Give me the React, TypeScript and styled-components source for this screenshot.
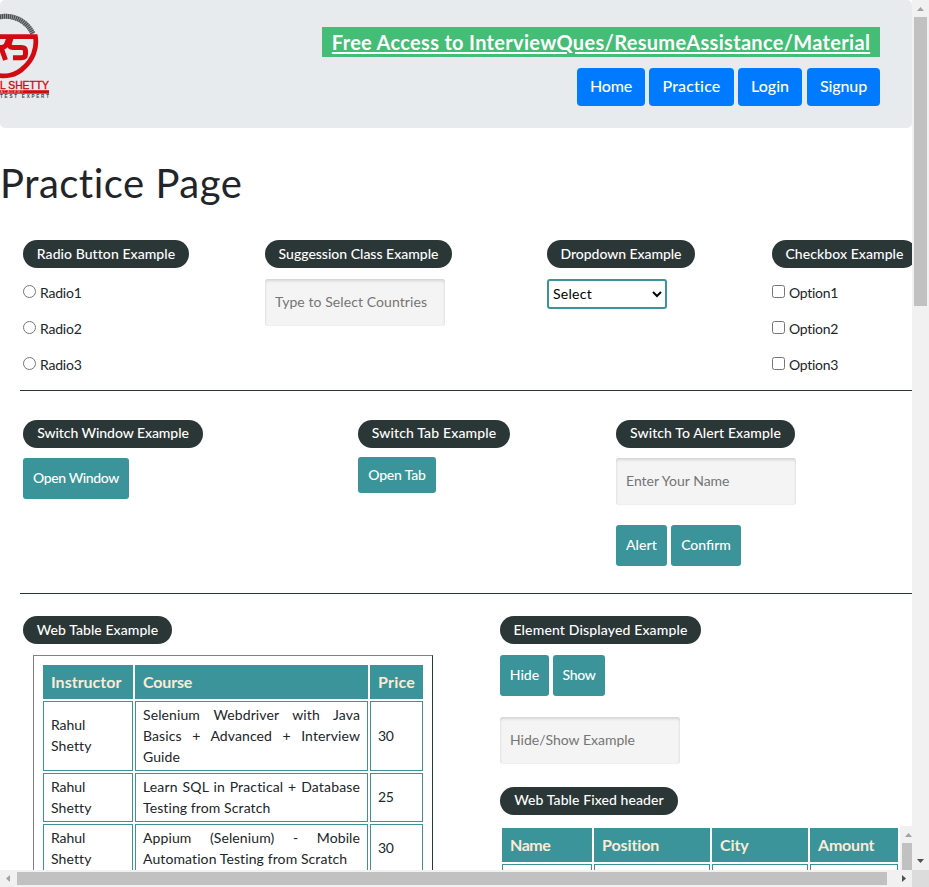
import React from "react";
import styled, { createGlobalStyle } from "styled-components";

const TEAL = "#3a9499";
const DARK = "#2b3636";

const GlobalStyle = createGlobalStyle`
  *, *::before, *::after { box-sizing: border-box; }
  html, body { margin: 0; overflow: hidden; background: #fff; }
  body, input, select, button {
    font-family: "Trebuchet MS", Lato, sans-serif;
  }
  body { font-size: 14px; line-height: 21px; color: #212529; }
`;

/* ---------- window frame ---------- */

const Window = styled.div`
  display: grid;
  grid-template: 870px 17px / 912px 17px;
  width: 929px;
  height: 887px;
  overflow: hidden;
`;

const Viewport = styled.main`
  overflow: hidden;
  min-width: 0;
`;

const VerticalTrack = styled.div<{ $height?: number }>`
  display: flex;
  flex-direction: column;
  width: 17px;
  flex: none;
  height: ${(p) => (p.$height ? `${p.$height}px` : "100%")};
  background: #f1f1f1;
`;

const HorizontalTrack = styled.div`
  display: flex;
  background: #f1f1f1;
`;

const Corner = styled.div`
  background: #dcdcdc;
`;

const VerticalThumb = styled.div<{ $length: number }>`
  width: 13px;
  height: ${(p) => p.$length}px;
  margin: 0 2px;
  background: #c1c1c1;
`;

const HorizontalThumb = styled.div<{ $length: number }>`
  width: ${(p) => p.$length}px;
  height: 13px;
  margin: 2px 0;
  background: #c1c1c1;
`;

const ArrowBox = styled.svg<{ $atEnd?: boolean }>`
  display: block;
  flex: none;
  width: 17px;
  height: 17px;
  ${(p) => p.$atEnd && "margin-top: auto;"}
`;

const EndArrow = styled(ArrowBox)`
  margin-left: auto;
`;

/* ---------- header ---------- */

const Header = styled.header`
  display: flex;
  justify-content: space-between;
  height: 128px;
  padding-right: 32px;
  border-radius: 5px;
  background: #e8ebee;
`;

const Logo = styled.svg`
  display: block;
  width: 60px;
  height: 128px;
`;

const HeaderActions = styled.div`
  display: flex;
  flex-direction: column;
  align-items: flex-end;
  gap: 11px;
  padding-top: 27px;
`;

const Banner = styled.a`
  display: flex;
  justify-content: center;
  width: 558px;
  height: 30px;
  background: #44bd76;
  color: #fff;
  font-size: 20px;
  font-weight: 700;
  line-height: 30px;
  letter-spacing: 0.31px;
  white-space: nowrap;
  text-decoration: underline;
  text-decoration-thickness: 2px;
  text-underline-offset: 2px;
`;

const Nav = styled.nav`
  display: grid;
  grid-template-columns: 68px 85px 64px 74px;
  column-gap: 4px;
`;

const NavButton = styled.a<{ $ls: number }>`
  height: 38px;
  border-radius: 4px;
  background: #007bff;
  color: #fff;
  font-size: 16px;
  font-weight: 500;
  line-height: 36px;
  letter-spacing: ${(p) => p.$ls}px;
  text-align: center;
  &:last-child { margin-left: 1px; }
`;

/* ---------- page sections ---------- */

const Title = styled.h1`
  margin: 32px 0 0;
  height: 80px;
  font-size: 40px;
  font-weight: 400;
  line-height: 47px;
  letter-spacing: 0.5px;
`;

const Section = styled.section<{ $columns: string; $height: number; $top?: number }>`
  display: grid;
  grid-template-columns: ${(p) => p.$columns};
  height: ${(p) => p.$height}px;
  padding-top: ${(p) => p.$top ?? 0}px;
  margin-left: 20px;
  padding-left: 3px;
  border-bottom: 1px solid ${DARK};
  align-items: start;
`;

const Field = styled.div<{ $gap?: number }>`
  display: flex;
  flex-direction: column;
  align-items: flex-start;
  gap: ${(p) => p.$gap ?? 11}px;
  min-width: 0;
`;

const Legend = styled.div<{ $width: number; $ls?: number; $lift?: number }>`
  flex: none;
  width: ${(p) => p.$width}px;
  height: 28px;
  border-radius: 14px;
  background: ${DARK};
  color: #fff;
  font-weight: 500;
  line-height: ${(p) => 28 - (p.$lift ?? 0)}px;
  letter-spacing: ${(p) => p.$ls ?? 0}px;
  text-align: center;
  white-space: nowrap;
`;

const Choices = styled.div`
  display: flex;
  flex-direction: column;
  gap: 15px;
  padding-top: 3px;
`;

const Choice = styled.label<{ $ls: number }>`
  display: flex;
  gap: 4px;
  height: 21px;
  letter-spacing: ${(p) => p.$ls}px;
  input {
    width: 13px;
    height: 13px;
    margin: 3px 0 0;
  }
`;

const TextInput = styled.input<{ $ls?: number }>`
  width: 180px;
  height: 47px;
  padding: 0 10px 2px;
  border: 0;
  border-radius: 3px;
  background: #f4f4f4;
  box-shadow: inset 0 2px 3px rgba(0, 0, 0, 0.12), inset 0 0 2px rgba(0, 0, 0, 0.06);
  font-size: 14px;
  letter-spacing: ${(p) => p.$ls ?? 0}px;
  outline: none;
  &::placeholder { color: #757575; }
`;

const Select = styled.select`
  width: 120px;
  height: 30px;
  padding: 0 0 2px;
  border: 2px solid ${TEAL};
  border-radius: 3px;
  background: #fff;
  color: #000;
  font-size: 14px;
  letter-spacing: 0.28px;
`;

const Buttons = styled.div`
  display: flex;
  gap: 4px;
`;

const Button = styled.button<{ $width: number; $height?: number; $ls?: number }>`
  width: ${(p) => p.$width}px;
  height: ${(p) => p.$height ?? 41}px;
  padding: 0 0 ${(p) => (p.$height ? 1 : 2)}px;
  border: 0;
  border-radius: 3px;
  background: ${TEAL};
  color: #fff;
  font-size: 14px;
  font-weight: 500;
  letter-spacing: ${(p) => p.$ls ?? 0}px;
  white-space: nowrap;
`;

const Spaced = styled.div<{ $top: number }>`
  margin-top: ${(p) => p.$top}px;
`;

/* ---------- tables ---------- */

const CourseTable = styled.div`
  display: grid;
  grid-template: 34px 70px 49px 49px / 90px 233px 53px;
  gap: 2px;
  margin-left: 10px;
  padding: 9px;
  border: 1px solid ${DARK};
  border-top-color: #808080;
  border-left-color: #808080;
`;

const PeopleFrame = styled.div`
  display: flex;
  width: 417px;
  margin-top: 11px;
`;

const PeopleTable = styled.div`
  display: grid;
  grid-template: 34px 49px / 90px 116px 96px 88px;
  gap: 2px;
  padding: 2px;
`;

const HeadCell = styled.div<{ $ls?: number }>`
  padding-left: 8px;
  background: ${TEAL};
  color: #faebd7;
  font-size: 16px;
  font-weight: 700;
  line-height: 34px;
  letter-spacing: ${(p) => p.$ls ?? 0}px;
`;

const Cell = styled.div`
  display: flex;
  flex-direction: column;
  justify-content: center;
  padding: 0 7px 2px;
  border: 1px solid ${TEAL};
`;

const Line = styled.div<{ $justify?: boolean; $ls?: number }>`
  white-space: nowrap;
  letter-spacing: ${(p) => p.$ls ?? 0.1}px;
  text-align-last: ${(p) => (p.$justify ? "justify" : "left")};
`;

type Course = { lines: { text: string; justify?: boolean; ls?: number }[]; price: string };

const courses: Course[] = [
  {
    lines: [
      { text: "Selenium Webdriver with Java", justify: true },
      { text: "Basics + Advanced + Interview", justify: true },
      { text: "Guide" },
    ],
    price: "30",
  },
  {
    lines: [
      { text: "Learn SQL in Practical + Database", justify: true, ls: 0.15 },
      { text: "Testing from Scratch" },
    ],
    price: "25",
  },
  {
    lines: [
      { text: "Appium (Selenium) - Mobile", justify: true },
      { text: "Automation Testing from Scratch" },
    ],
    price: "30",
  },
];

function BrandLogo() {
  return (
    <Logo viewBox="0 0 60 128">
      <path d="M-4 17.900A30 30 0 0 1 33 34" fill="none" stroke="#a7abad" strokeWidth="5" />
      <path d="M-4 17.900A30 30 0 0 1 33 34" fill="none" stroke="#4d5052" strokeWidth="5" strokeDasharray="1.3 0.7" />
      <g fill="none" stroke="#d20a11">
        <path d="M-3 36.700H35.400C37.500 49 32 60 24.500 67C16 76 4 77.500 -5 74.500" strokeWidth="4.800" />
        <path d="M-1 47.500H2Q6 47 7 43L9 38M1 47.500L5.500 60" strokeWidth="5" />
        <path d="M11.500 36.500L9.500 43Q8.500 47.500 13 47.500H21.500Q25.500 47.500 25.500 51V54Q25.500 57.700 21.500 57.700H13" strokeWidth="5" />
      </g>
      <g fontFamily="Liberation Sans, sans-serif">
        <text x="0" y="89" fontSize="11.500" fill="#d20a11" stroke="#d20a11" strokeWidth=".4" textLength="49" lengthAdjust="spacingAndGlyphs" xmlSpace="preserve">L SHETTY</text>
        <rect x="0" y="90.200" width="49" height="3.500" fill="#d20a11" />
        <text x="0.500" y="93.300" fontSize="3.600" fill="#f2b9bb" textLength="23">ACADEMY</text>
        <text x="0" y="98" fontSize="4.600" fontWeight="700" fill="#3f4447" textLength="49">TEST EXPERT</text>
      </g>
    </Logo>
  );
}

function UpArrow() {
  return (
    <ArrowBox viewBox="0 0 17 17">
      <path d="M5 11H12L8.500 7Z" fill="#a3a3a3" />
    </ArrowBox>
  );
}

export default function App() {
  return (
    <>
      <GlobalStyle />
      <Window>
        <Viewport>
          <Header>
            <BrandLogo />
            <HeaderActions>
              <Banner>Free Access to InterviewQues/ResumeAssistance/Material</Banner>
              <Nav>
                <NavButton $ls={-0.2}>Home</NavButton>
                <NavButton $ls={0.18}>Practice</NavButton>
                <NavButton $ls={0.05}>Login</NavButton>
                <NavButton $ls={-0.1}>Signup</NavButton>
              </Nav>
            </HeaderActions>
          </Header>

          <Title>Practice Page</Title>

          <Section $columns="242px 282px 225px 160px" $height={151}>
            <Field>
              <Legend $width={166} $ls={0.07}>Radio Button Example</Legend>
              <Choices>
                {["Radio1", "Radio2", "Radio3"].map((r) => (
                  <Choice key={r} $ls={-0.2}>
                    <input type="radio" name="radio" />
                    {r}
                  </Choice>
                ))}
              </Choices>
            </Field>
            <Field>
              <Legend $width={187}>Suggession Class Example</Legend>
              <TextInput $ls={0.08} placeholder="Type to Select Countries" />
            </Field>
            <Field>
              <Legend $width={148} $ls={-0.05}>Dropdown Example</Legend>
              <Select>
                <option>Select</option>
              </Select>
            </Field>
            <Field>
              <Legend $width={145} $ls={0.07}>Checkbox Example</Legend>
              <Choices>
                {["Option1", "Option2", "Option3"].map((o) => (
                  <Choice key={o} $ls={-0.3}>
                    <input type="checkbox" />
                    {o}
                  </Choice>
                ))}
              </Choices>
            </Field>
          </Section>

          <Section $columns="335px 258px 296px" $height={203} $top={29}>
            <Field $gap={10}>
              <Legend $width={180} $ls={-0.06} $lift={2}>Switch Window Example</Legend>
              <Button $width={106} $ls={-0.38}>Open Window</Button>
            </Field>
            <Field $gap={9}>
              <Legend $width={152} $ls={0.15} $lift={2}>Switch Tab Example</Legend>
              <Button $width={78} $height={36} $ls={-0.17}>Open Tab</Button>
            </Field>
            <Field $gap={10}>
              <Legend $width={179} $ls={0.11} $lift={2}>Switch To Alert Example</Legend>
              <TextInput placeholder="Enter Your Name" />
              <Spaced $top={10}>
                <Buttons>
                  <Button $width={51} $ls={0.1}>Alert</Button>
                  <Button $width={70}>Confirm</Button>
                </Buttons>
              </Spaced>
            </Field>
          </Section>

          <Section $columns="477px 412px" $height={400} $top={22}>
            <Field>
              <Legend $width={149} $ls={0.07}>Web Table Example</Legend>
              <CourseTable>
                <HeadCell>Instructor</HeadCell>
                <HeadCell $ls={-0.15}>Course</HeadCell>
                <HeadCell $ls={0.2}>Price</HeadCell>
                {courses.map((c, i) => (
                  <React.Fragment key={i}>
                    <Cell>
                      <Line $ls={-0.05}>Rahul</Line>
                      <Line>Shetty</Line>
                    </Cell>
                    <Cell>
                      {c.lines.map((l) => (
                        <Line key={l.text} $justify={l.justify} $ls={l.ls}>{l.text}</Line>
                      ))}
                    </Cell>
                    <Cell>
                      <Line $ls={-0.4}>{c.price}</Line>
                    </Cell>
                  </React.Fragment>
                ))}
              </CourseTable>
            </Field>
            <Field $gap={0}>
              <Legend $width={201} $ls={0.15}>Element Displayed Example</Legend>
              <Spaced $top={11}>
                <Buttons>
                  <Button $width={49}>Hide</Button>
                  <Button $width={52} $ls={-0.3}>Show</Button>
                </Buttons>
              </Spaced>
              <Spaced $top={21}>
                <TextInput placeholder="Hide/Show Example" />
              </Spaced>
              <Spaced $top={23}>
                <Legend $width={178} $ls={0.09} $lift={2}>Web Table Fixed header</Legend>
              </Spaced>
              <PeopleFrame>
                <PeopleTable>
                  <HeadCell $ls={-0.45}>Name</HeadCell>
                  <HeadCell $ls={-0.1}>Position</HeadCell>
                  <HeadCell $ls={-0.1}>City</HeadCell>
                  <HeadCell $ls={-0.2}>Amount</HeadCell>
                  <Cell />
                  <Cell />
                  <Cell />
                  <Cell />
                </PeopleTable>
                <VerticalTrack $height={80}>
                  <UpArrow />
                  <VerticalThumb $length={60} />
                </VerticalTrack>
              </PeopleFrame>
            </Field>
          </Section>
        </Viewport>

        <VerticalTrack>
          <UpArrow />
          <VerticalThumb $length={289} />
          <ArrowBox viewBox="0 0 17 17" $atEnd>
            <path d="M5 6H12L8.500 10Z" fill="#505050" />
          </ArrowBox>
        </VerticalTrack>
        <HorizontalTrack>
          <ArrowBox viewBox="0 0 17 17">
            <path d="M10 5V12L6 8.500Z" fill="#a3a3a3" />
          </ArrowBox>
          <HorizontalThumb $length={870} />
          <EndArrow viewBox="0 0 17 17">
            <path d="M7 5V12L11 8.500Z" fill="#505050" />
          </EndArrow>
        </HorizontalTrack>
        <Corner />
      </Window>
    </>
  );
}
